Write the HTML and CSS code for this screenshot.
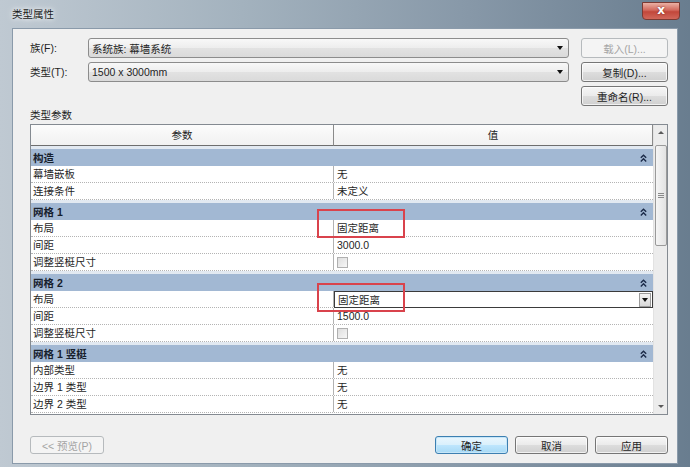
FILE: index.html
```html
<!DOCTYPE html>
<html lang="zh-CN">
<head>
    <meta charset="UTF-8">
    <title>类型属性</title>
    <link rel="stylesheet" href="styles.css">
</head>
<body>
    <div class="window">
        <div class="titlebar">
            <span class="title">类型属性</span>
            <div class="close">x</div>
        </div>

        <div class="client">
            <!-- 族 / 类型 选择 -->
            <div class="top-grid">
                <div class="lbl">族(F):</div>
                <div class="combo"><span>系统族: 幕墙系统</span><i class="arrow"></i></div>
                <button class="btn disabled">载入(L)...</button>

                <div class="lbl">类型(T):</div>
                <div class="combo"><span>1500 x 3000mm</span><i class="arrow"></i></div>
                <button class="btn">复制(D)...</button>

                <div></div>
                <div></div>
                <button class="btn">重命名(R)...</button>
            </div>

            <div class="section-label">类型参数</div>

            <div class="prop-table">
                <div class="grid">
                    <div class="head">
                        <div class="hcell param">参数</div>
                        <div class="hcell value">值</div>
                    </div>

                    <div class="group"><span>构造</span><svg class="fold" width="7" height="8" viewBox="0 0 7 8"><polyline points="0.8,3.8 3.5,1.2 6.2,3.8"/><polyline points="0.8,7.4 3.5,4.8 6.2,7.4"/></svg></div>
                    <div class="row"><div class="cell param">幕墙嵌板</div><div class="cell value">无</div></div>
                    <div class="row"><div class="cell param">连接条件</div><div class="cell value">未定义</div></div>

                    <div class="group"><span>网格 1</span><svg class="fold" width="7" height="8" viewBox="0 0 7 8"><polyline points="0.8,3.8 3.5,1.2 6.2,3.8"/><polyline points="0.8,7.4 3.5,4.8 6.2,7.4"/></svg></div>
                    <div class="row"><div class="cell param">布局</div><div class="cell value">固定距离</div></div>
                    <div class="row"><div class="cell param">间距</div><div class="cell value">3000.0</div></div>
                    <div class="row"><div class="cell param">调整竖梃尺寸</div><div class="cell value"><i class="check"></i></div></div>

                    <div class="group"><span>网格 2</span><svg class="fold" width="7" height="8" viewBox="0 0 7 8"><polyline points="0.8,3.8 3.5,1.2 6.2,3.8"/><polyline points="0.8,7.4 3.5,4.8 6.2,7.4"/></svg></div>
                    <div class="row"><div class="cell param">布局</div><div class="cell value editing"><span>固定距离</span><i class="drop"><i class="arrow"></i></i></div></div>
                    <div class="row"><div class="cell param">间距</div><div class="cell value">1500.0</div></div>
                    <div class="row"><div class="cell param">调整竖梃尺寸</div><div class="cell value"><i class="check"></i></div></div>

                    <div class="group"><span>网格 1 竖梃</span><svg class="fold" width="7" height="8" viewBox="0 0 7 8"><polyline points="0.8,3.8 3.5,1.2 6.2,3.8"/><polyline points="0.8,7.4 3.5,4.8 6.2,7.4"/></svg></div>
                    <div class="row"><div class="cell param">内部类型</div><div class="cell value">无</div></div>
                    <div class="row"><div class="cell param">边界 1 类型</div><div class="cell value">无</div></div>
                    <div class="row"><div class="cell param">边界 2 类型</div><div class="cell value">无</div></div>
                </div>

                <div class="vscroll">
                    <i class="sarrow up"></i>
                    <div class="thumb"><i class="grip"></i></div>
                    <div class="track"></div>
                    <i class="sarrow down"></i>
                </div>
            </div>

            <div class="footer">
                <button class="btn disabled preview">&lt;&lt; 预览(P)</button>
                <div class="spacer"></div>
                <button class="btn default">确定</button>
                <button class="btn">取消</button>
                <button class="btn">应用</button>
            </div>
        </div>

        <!-- 标注框 -->
        <div class="mark mark-1"></div>
        <div class="mark mark-2"></div>
    </div>
</body>
</html>
```

FILE: styles.css
```css
* {
    box-sizing: border-box;
}
html, body {
    margin: 0;
    padding: 0;
}
body {
    width: 690px;
    height: 467px;
    overflow: hidden;
    font-family: "Liberation Sans", "Noto Sans CJK SC", sans-serif;
    font-size: 10.5px;
    color: #1f1f1f;
    background: #6f8496;
}
.window {
    position: relative;
    width: 690px;
    height: 467px;
    display: flex;
    flex-direction: column;
    background: linear-gradient(to right, #bfc9d2 0%, #a3b2be 35%, #8798a8 68%, #697d8f 100%);
}
.titlebar {
    height: 28px;
    display: flex;
    justify-content: space-between;
    align-items: flex-start;
    padding-left: 12px;
}
.title {
    margin-top: 7px;
    line-height: 14px;
    color: #1b1b1b;
    text-shadow: 0 0 4px #fff, 0 0 8px rgba(255, 255, 255, 0.8);
}
.close {
    width: 38px;
    height: 18px;
    margin: 2px 10px 0 0;
    border: 1px solid #7a3a33;
    border-radius: 0 0 4px 4px;
    background: linear-gradient(#eab0a4, #d2685c 45%, #c2473b 55%, #d1675a);
    color: #fff;
    font-family: "DejaVu Sans", sans-serif;
    font-weight: bold;
    font-size: 12px;
    line-height: 15px;
    text-align: center;
    text-shadow: 0 0 2px #6a2019;
}
.client {
    margin: 0 12px;
    height: 436px;
    background: #f0f0f0;
    border: 1px solid #8a9aaa;
    padding: 9px 9px 0 17px;
    display: flex;
    flex-direction: column;
}

/* top selectors */
.top-grid {
    display: grid;
    grid-template-columns: 46px 481px 87px;
    grid-auto-rows: 20px;
    column-gap: 12px;
    row-gap: 4px;
}
.lbl {
    line-height: 20px;
}
.combo {
    display: flex;
    align-items: center;
    justify-content: space-between;
    padding: 0 5px 0 3px;
    border: 1px solid #8c8c8c;
    border-radius: 3px;
    background: linear-gradient(#f8f8f8, #ededed 50%, #e2e2e2 51%, #dadada);
}
.arrow {
    display: block;
    width: 0;
    height: 0;
    border-left: 3px solid transparent;
    border-right: 3px solid transparent;
    border-top: 4px solid #111;
}
.btn {
    font-family: inherit;
    font-size: 10.5px;
    color: #1f1f1f;
    padding: 0;
    border: 1px solid #767676;
    border-radius: 3px;
    background: linear-gradient(#f6f6f6, #ebebeb 50%, #dddddd 51%, #d0d0d0);
    box-shadow: inset 0 0 0 1px rgba(255, 255, 255, 0.7);
}
.btn.disabled {
    color: #a4a4a4;
    border-color: #b6babd;
    background: #f4f4f4;
    box-shadow: none;
}
.btn.default {
    border-color: #3c7fb1;
    background: linear-gradient(#eaf6fd, #d9f0fc 50%, #bee6fd 51%, #a7d9f5);
    box-shadow: inset 0 0 0 1px #c6e6f8;
}

.section-label {
    height: 18px;
    line-height: 18px;
}

/* property grid */
.prop-table {
    display: flex;
    height: 291px;
    border: 1px solid #848a91;
    background: #fff;
}
.grid {
    width: 622px;
    display: flex;
    flex-direction: column;
}
.head {
    display: flex;
    height: 21px;
}
.hcell {
    line-height: 20px;
    text-align: center;
    background: linear-gradient(#fcfcfc, #f1f1f1);
    border-bottom: 1px solid #6e6e6e;
}
.hcell.param {
    width: 303px;
    border-right: 1px solid #8a8a8a;
}
.hcell.value {
    flex: 1;
    border-right: 1px solid #8a8a8a;
}
.group {
    height: 20px;
    display: flex;
    justify-content: space-between;
    align-items: center;
    padding: 0 6px 0 2px;
    border-top: 3px solid #e2e9f1;
    background: #a2b8d3;
    font-weight: bold;
    color: #17202c;
}
.fold {
    fill: none;
    stroke: #1b2a48;
    stroke-width: 1.4;
}
.row {
    display: flex;
    height: 17px;
    border-bottom: 1px dotted #b4b4b4;
}
.cell {
    line-height: 16px;
    padding-left: 2px;
}
.cell.param {
    width: 303px;
    border-right: 1px solid #b2b2b2;
}
.cell.value {
    flex: 1;
    display: flex;
    align-items: center;
    padding-left: 3px;
}
.cell.value.editing {
    justify-content: space-between;
    border: 1px solid #3b3b3b;
    padding-right: 0;
    margin-bottom: -1px;
}
.drop {
    display: flex;
    align-items: center;
    justify-content: center;
    width: 12px;
    height: 14px;
    margin-right: 1px;
    border: 1px solid #9a9a9a;
    background: linear-gradient(#f4f4f4, #d8d8d8);
}
.check {
    display: block;
    width: 11px;
    height: 11px;
    border: 1px solid #b0b0b0;
    background: linear-gradient(135deg, #dedede, #f7f7f7);
}

/* scrollbar */
.vscroll {
    width: 14px;
    display: flex;
    flex-direction: column;
    align-items: center;
    background: #ececec;
    border-left: 1px solid #e2e2e2;
}
.sarrow {
    display: block;
    width: 0;
    height: 0;
    border-left: 3px solid transparent;
    border-right: 3px solid transparent;
}
.sarrow.up {
    margin: 6px 0 11px;
    border-bottom: 3px solid #5a5a5a;
}
.sarrow.down {
    margin: 0 0 6px;
    border-top: 3px solid #5a5a5a;
}
.thumb {
    width: 12px;
    height: 101px;
    border: 1px solid #9a9a9a;
    border-radius: 2px;
    background: linear-gradient(to right, #f5f5f5, #e2e2e2);
    display: flex;
    align-items: center;
    justify-content: center;
}
.grip {
    display: block;
    width: 6px;
    height: 5px;
    border-top: 1px solid #8a8a8a;
    border-bottom: 1px solid #8a8a8a;
    background: linear-gradient(transparent 1px, #8a8a8a 1px, #8a8a8a 2px, transparent 2px);
}
.track {
    flex: 1;
}

/* bottom buttons */
.footer {
    display: flex;
    gap: 7px;
    margin-top: 21px;
    height: 18px;
}
.footer .btn {
    width: 73px;
}
.footer .preview {
    width: 74px;
}
.spacer {
    flex: 1;
}

/* red annotation boxes */
.mark {
    position: absolute;
    left: 317px;
    width: 88px;
    height: 29px;
    border: 2px solid #d9434c;
}
.mark-1 {
    top: 209px;
}
.mark-2 {
    top: 283px;
}
```
